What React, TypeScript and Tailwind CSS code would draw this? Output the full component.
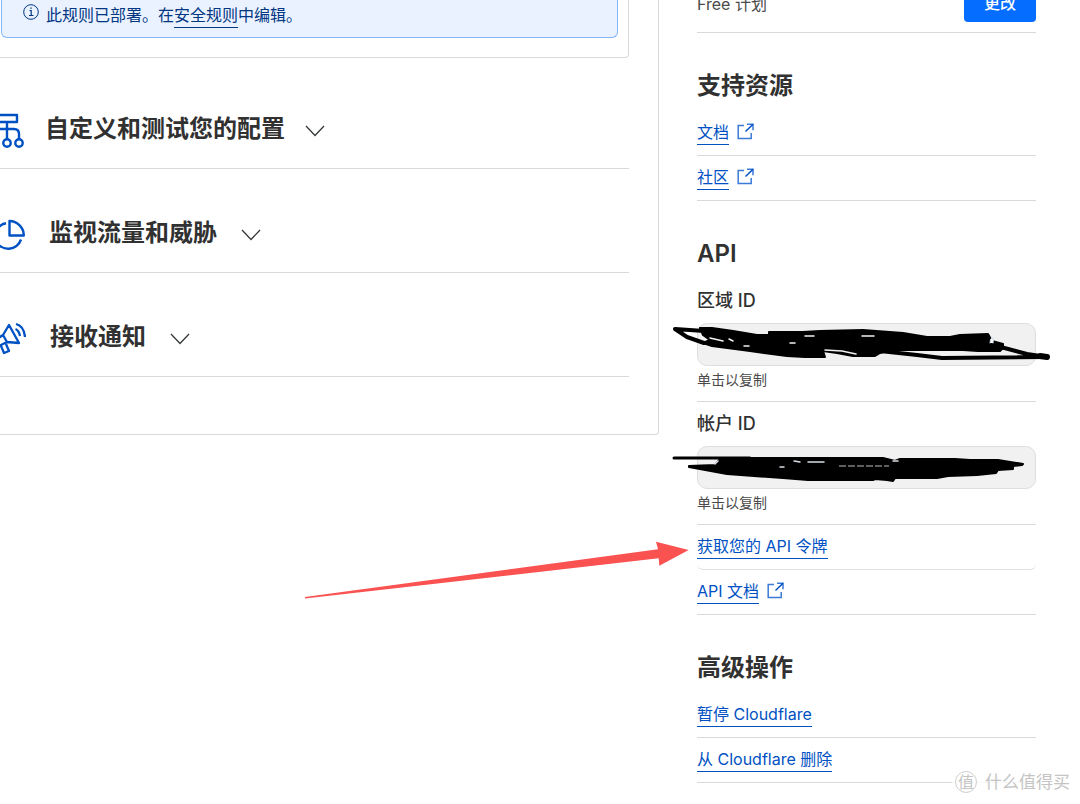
import type { ReactNode } from 'react'

const linkClass = 'inline-block border-b border-[#0051c3] text-base leading-6 text-[#0051c3]'

function Chevron() {
  return (
    <svg width="20" height="12" viewBox="0 0 20 12" fill="none" stroke="#36393a" strokeWidth="1.3">
      <path d="M1 1l9 9.5L19 1" />
    </svg>
  )
}

function ExternalIcon() {
  return (
    <svg width="17" height="17" viewBox="0 0 17 17" fill="none" stroke="#3b7ad6" strokeWidth="1.5">
      <path d="M7 2.5H1.2v13h13V10M10 1.2h6v6" />
      <path d="M16 1.2L8.5 8.5" stroke="#0051c3" />
    </svg>
  )
}

function NetworkIcon() {
  return (
    <svg width="25" height="36" viewBox="0 0 25 36" fill="none" stroke="#0051c3" strokeWidth="2.4" strokeLinejoin="round">
      <path d="M-4 2h21v7H-4M7 9v17M-2 16h16q5 0 5 5v5" />
      <circle cx="7" cy="30" r="3.7" />
      <circle cx="19" cy="30" r="3.7" />
    </svg>
  )
}

function PieIcon() {
  return (
    <svg width="25" height="32" viewBox="0 0 25 32" fill="none" stroke="#0051c3" strokeWidth="2.4" strokeLinejoin="round">
      <path d="M9.5 2v14.5H23.8A14.5 14.5 0 0 0 9.5 2z" />
      <path d="M6 4.300A13 13 0 0 0-5 17M-4 22a13.500 13.500 0 0 0 25-1.500" />
    </svg>
  )
}

function MegaphoneIcon() {
  return (
    <svg width="26" height="34" viewBox="0 0 26 34" fill="none" stroke="#0051c3" strokeWidth="2.300" strokeLinejoin="round">
      <path d="M9 3l10 18-12-1L3 13zM3 13l-6 4v8l10-5M1 24l3 7 5-2-3-7" />
      <path d="M15.500 7q3.500 1.500 4.500 7M16 2q8 2 9 13" />
    </svg>
  )
}

const sections = [
  { title: '自定义和测试您的配置', icon: <NetworkIcon />, gap: 'gap-5' },
  { title: '监视流量和威胁', icon: <PieIcon />, gap: 'gap-6' },
  { title: '接收通知', icon: <MegaphoneIcon />, gap: 'gap-6' },
]

function SideHeading({ children }: { children: ReactNode }) {
  return <h2 className="pt-[37px] pb-[9px] text-2xl leading-8 font-semibold text-[#313131]">{children}</h2>
}

function LinkRow({ label, external = false, last = false, children }: { label: string; external?: boolean; last?: boolean; children?: ReactNode }) {
  return (
    <li className={`relative flex h-[45px] gap-2 border-b pt-[9px] ${last ? 'rounded-b-md border-[#e0e0e0]' : 'border-[#d9d9d9]'}`}>
      <div>
        <a href="#" className={linkClass}>{label}</a>
      </div>
      {external && <div className="pt-[3px]"><ExternalIcon /></div>}
      {children}
    </li>
  )
}

function IdField({ id, label, children }: { id: string; label: string; children: ReactNode }) {
  return (
    <div className="border-b border-[#d9d9d9] pt-[10px] pb-[11px]">
      <label htmlFor={id} className="block text-lg leading-6 font-medium text-[#313131]">{label}</label>
      <div className="relative mt-[10px] h-[43px]">
        <input id={id} readOnly className="block h-full w-full rounded-[10px] border border-[#dedede] bg-[#f1f1f1] px-3 text-sm" />
        {children}
      </div>
      <p className="mt-1 text-sm leading-5 text-[#4a4a4a]">单击以复制</p>
    </div>
  )
}

function ZoneScribble() {
  return (
    <svg className="pointer-events-none absolute top-0 -left-[25px]" width="380" height="43" viewBox="0 0 380 43" strokeLinecap="round" strokeLinejoin="round">
      <path d="M28 5L40 5 61 8 85 12H97V9H131L148 8 191 7 231 10 255 14H278L288 12 316 11 320 18 331 21V25L328 28H306L291 27H220L208 30 203 33H181L165 30 151 28 153 34H133L115 33 78 28 40 23 31 20 38 17 31 12z" stroke="#000" strokeWidth="2" />
      <path d="M32 8L3 6 15 14 32 20M325 23L355 31 375 34 270 35 245 32 208 28" fill="none" stroke="#000" strokeWidth="4" />
      <path d="M368 33l7 1" stroke="#000" strokeWidth="6" />
      <path d="M38 15l13 3M57 16l4 2M72 23h5M118 20h5M133 13h9M190 13h12M153 27l17 1 14 3" fill="none" stroke="#f1f1f1" strokeWidth="1.5" />
      <path d="M318 20q0-5 2-5t1 5" fill="#fff" stroke="#c8d4e8" />
    </svg>
  )
}

function AccountScribble() {
  return (
    <svg className="pointer-events-none absolute top-0 -left-[25px]" width="380" height="43" viewBox="0 0 380 43" strokeLinecap="round" strokeLinejoin="round">
      <path d="M17 20L43 19 47 14 78 12H211L223 15 228 13H283L298 14H326L351 18 350 19 341 20V23L326 24 324 27 305 29 276 30 265 32H223L221 35 215 34 203 33 201 34H136L111 32 55 28 17 21z" stroke="#000" strokeWidth="2" />
      <path d="M2 12H78" stroke="#000" strokeWidth="3" />
      <path d="M43 18l3-3M108 21h4M122 15l6 1M136 16h16M221 15h5" fill="none" stroke="#d8dde6" strokeWidth="1.5" />
      <path d="M167 20H217" stroke="#bbb" strokeDasharray="7 2" strokeLinecap="butt" />
    </svg>
  )
}

export default function App() {
  return (
    <div className="relative overflow-hidden bg-white pb-[21px] font-['Inter','Noto_Sans_CJK_SC',sans-serif]">
      <div className="flex items-start gap-[38px] pr-11">
        <main className="min-w-0 flex-1 rounded-br border-r border-b border-[#d9d9d9] pr-[29px] pb-[57px]">
          <div className="rounded-br border-r border-b border-[#d9d9d9] pr-[10px] pb-[19px] pl-px">
            <div className="flex h-[38px] gap-[7px] rounded-b-md border border-t-0 border-[#82b6ff] bg-[#ebf2ff] pt-[3px] pl-[21px] text-[#003682]">
              <svg className="mt-px" width="16" height="16" viewBox="0 0 16 16" fill="none" stroke="currentColor">
                <circle cx="8" cy="8" r="7.300" />
                <path d="M6.500 6.500H8.200V11.500M6 11.500h4.500M7.300 4.200h1.400" strokeWidth="1.200" />
              </svg>
              <p className="text-base leading-6">
                此规则已部署。在<a href="#" className="inline-block border-b border-[#003682] leading-[23px]">安全规则</a>中编辑。
              </p>
            </div>
          </div>

          <div className="pt-[7px]">
            {sections.map(s => (
              <section key={s.title} className="border-b border-[#d9d9d9] pt-12 pb-[23px]">
                <button className={`flex h-8 items-center text-left ${s.gap}`}>
                  <span className="pt-1">{s.icon}</span>
                  <span className="text-2xl leading-8 font-bold text-[#313131]">{s.title}</span>
                  <span className="pt-1"><Chevron /></span>
                </button>
              </section>
            ))}
          </div>
        </main>

        <aside className="w-[339px] shrink-0">
          <div className="flex h-[33px] justify-between border-b border-[#d9d9d9]">
            <p className="-mt-2 text-base leading-6 text-[#4a4a4a]">Free 计划</p>
            <button className="-mt-4 h-[38px] w-[72px] rounded bg-[#056dff] text-base font-medium text-white">更改</button>
          </div>

          <SideHeading>支持资源</SideHeading>
          <ul>
            <LinkRow label="文档" external />
            <LinkRow label="社区" external />
          </ul>

          <SideHeading>API</SideHeading>
          <IdField id="zone-id" label="区域 ID"><ZoneScribble /></IdField>
          <IdField id="account-id" label="帐户 ID"><AccountScribble /></IdField>
          <ul>
            <LinkRow label="获取您的 API 令牌" last>
              <svg className="pointer-events-none absolute top-4 -left-[392px]" width="384" height="60" viewBox="0 0 384 60" fill="#fa5151">
                <path d="M0 56L353 8.300 351 .7 383.700 9 354.300 24.700 353.700 17.300 0 57.500z" />
              </svg>
            </LinkRow>
            <LinkRow label="API 文档" external />
          </ul>

          <SideHeading>高级操作</SideHeading>
          <ul>
            <LinkRow label="暂停 Cloudflare" />
            <LinkRow label="从 Cloudflare 删除" />
          </ul>
        </aside>
      </div>

      {/* 水印 */}
      <div className="absolute right-[10px] bottom-[10px] flex items-center gap-2 bg-white/80 pl-[3px] text-[#c4c4c4]">
        <span className="flex size-[22px] items-center justify-center rounded-full border border-[#cfcfcf] text-base leading-5">值</span>
        <span className="text-[17px] leading-6">什么值得买</span>
      </div>
    </div>
  )
}
